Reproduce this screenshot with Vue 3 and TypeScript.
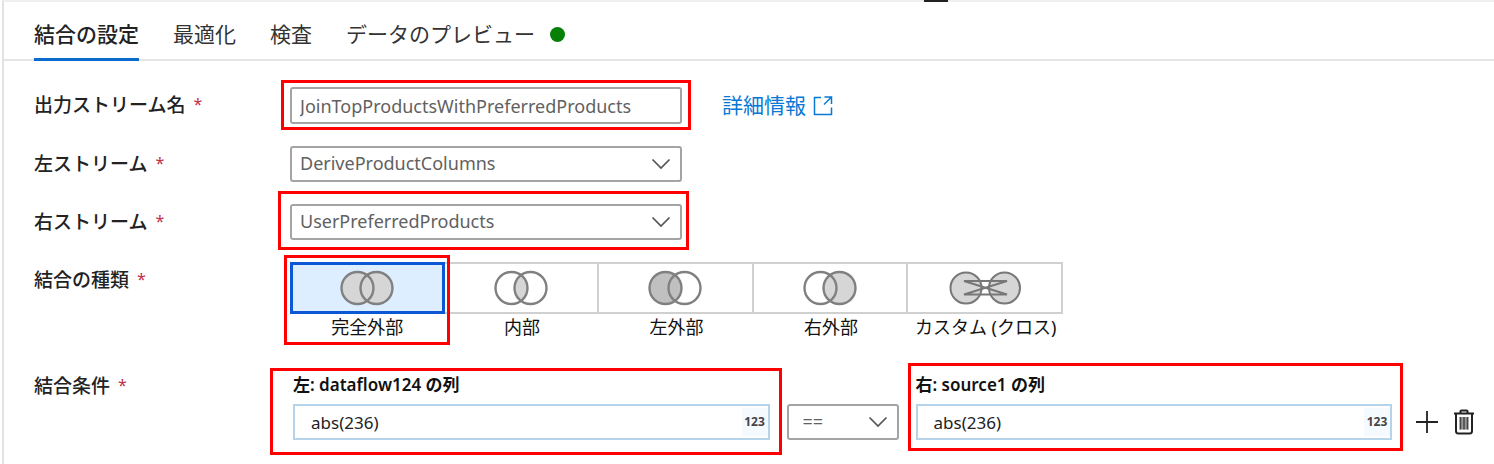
<script setup lang="ts">
import { ref } from 'vue'

type JoinKind = 'full' | 'inner' | 'left' | 'right' | 'cross'

const tabs = ['結合の設定', '最適化', '検査', 'データのプレビュー']
const activeTab = ref(0)

const outputName = ref('JoinTopProductsWithPreferredProducts')
const leftStream = ref('DeriveProductColumns')
const rightStream = ref('UserPreferredProducts')
const streams = ['DeriveProductColumns', 'UserPreferredProducts']

const joinKinds: { id: JoinKind; label: string }[] = [
  { id: 'full', label: '完全外部' },
  { id: 'inner', label: '内部' },
  { id: 'left', label: '左外部' },
  { id: 'right', label: '右外部' },
  { id: 'cross', label: 'カスタム (クロス)' },
]
const joinKind = ref<JoinKind>('full')

const leftExpr = ref('abs(236)')
const rightExpr = ref('abs(236)')
const operator = ref('==')
</script>

<template>
  <main class="panel">
    <span class="handle" aria-hidden="true"></span>
    <div class="tabs" role="tablist">
      <button
        v-for="(tab, i) in tabs"
        :key="tab"
        type="button"
        role="tab"
        class="tab"
        :class="{ active: activeTab === i }"
        :aria-selected="activeTab === i"
        @click="activeTab = i"
      >{{ tab }}</button>
      <span class="status"></span>
    </div>

    <form class="form" @submit.prevent>
      <div class="row">
        <label class="name" for="output">出力ストリーム名<span class="req">*</span></label>
        <div class="field marked marked-output">
          <input id="output" v-model="outputName" class="box" type="text" />
        </div>
        <a class="more" href="#">詳細情報
          <svg width="21" height="21" viewBox="0 0 21 21" fill="none" stroke="currentColor" stroke-width="1.5">
            <path d="M8 2.500H1.500V19.500H18.500V12.500M11.500 2H18.500V9M18.500 2L11 9.500" />
          </svg>
        </a>
      </div>

      <div class="row">
        <label class="name" for="left">左ストリーム<span class="req">*</span></label>
        <div class="field">
          <select id="left" v-model="leftStream" class="box">
            <option v-for="s in streams" :key="s">{{ s }}</option>
          </select>
          <svg class="chevron" width="20" height="12" viewBox="0 0 20 12"><path d="M1.500 1.500L10 10L18.500 1.500" /></svg>
        </div>
      </div>

      <div class="row">
        <label class="name" for="right">右ストリーム<span class="req">*</span></label>
        <div class="field marked marked-right">
          <select id="right" v-model="rightStream" class="box">
            <option v-for="s in streams" :key="s">{{ s }}</option>
          </select>
          <svg class="chevron" width="20" height="12" viewBox="0 0 20 12"><path d="M1.500 1.500L10 10L18.500 1.500" /></svg>
        </div>
      </div>

      <div class="row" role="radiogroup" aria-labelledby="kind-name">
        <span id="kind-name" class="name">結合の種類<span class="req">*</span></span>
        <div class="kinds">
          <label
            v-for="k in joinKinds"
            :key="k.id"
            class="kind"
            :class="{ selected: joinKind === k.id, marked: k.id === 'full', 'marked-kind': k.id === 'full' }"
          >
            <input v-model="joinKind" class="radio" type="radio" name="kind" :value="k.id" />
            <span class="tile">
              <svg v-if="k.id !== 'cross'" width="54" height="36" viewBox="0 0 54 36" stroke="#808080" stroke-width="2.400" fill="none">
                <circle v-if="k.id === 'full' || k.id === 'left'" cx="17.500" cy="18" r="16" :fill="k.id === 'left' ? '#c0c0c0' : '#d6d6d6'" stroke="none" />
                <circle v-if="k.id === 'full' || k.id === 'right'" cx="36.500" cy="18" r="16" fill="#d6d6d6" stroke="none" />
                <path v-if="k.id === 'inner'" d="M27 5.200A16 16 0 0 1 27 30.800A16 16 0 0 1 27 5.200Z" fill="#d6d6d6" stroke="none" />
                <circle cx="17.500" cy="18" r="16" />
                <circle cx="36.500" cy="18" r="16" />
              </svg>
              <svg v-else width="74" height="36" viewBox="0 0 74 36" stroke="#777" stroke-width="2" fill="none">
                <circle cx="18" cy="18" r="15.500" fill="#d6d6d6" />
                <circle cx="56.500" cy="18" r="15.500" fill="#d6d6d6" />
                <path d="M16 11H59L16 24.500H59L16 11Z" />
              </svg>
            </span>
            <span class="caption">{{ k.label }}</span>
          </label>
        </div>
      </div>

      <div class="row condition">
        <span class="name">結合条件<span class="req">*</span></span>
        <div class="clause">
          <div class="side marked marked-left-expr">
            <label class="heading" for="lexpr">左: dataflow124 の列</label>
            <div class="expr">
              <input id="lexpr" v-model="leftExpr" type="text" />
              <span class="kindtag">123</span>
            </div>
          </div>
          <div class="operator">
            <select v-model="operator" class="box" aria-label="演算子">
              <option>==</option>
            </select>
            <svg class="chevron" width="20" height="12" viewBox="0 0 20 12"><path d="M1.500 1.500L10 10L18.500 1.500" /></svg>
          </div>
          <div class="side marked marked-right-expr">
            <label class="heading" for="rexpr">右: source1 の列</label>
            <div class="expr">
              <input id="rexpr" v-model="rightExpr" type="text" />
              <span class="kindtag">123</span>
            </div>
          </div>
          <div class="actions">
            <button type="button" aria-label="追加">
              <svg width="24" height="24" viewBox="0 0 24 24" fill="none" stroke="#222" stroke-width="1.800"><path d="M12 1V23M1 12H23" /></svg>
            </button>
            <button type="button" aria-label="削除">
              <svg width="22" height="26" viewBox="0 0 22 26" fill="none" stroke="#222" stroke-width="2">
                <path d="M1 4.500H21M7.500 4V2Q7.500 1.500 8.500 1.500H13.500Q14.500 1.500 14.500 2V4M3 5V22Q3 24.500 5.500 24.500H16.500Q19 24.500 19 22V5" />
                <rect x="6.500" y="8" width="9" height="12.500" fill="#999" stroke="none" />
                <path d="M7.500 8V20.500M11 8V20.500M14.500 8V20.500" stroke="#444" stroke-width="1.500" />
              </svg>
            </button>
          </div>
        </div>
      </div>
    </form>
  </main>
</template>

<style>
body {
  margin: 0;
  background: #fff;
}
</style>

<style scoped>
.panel {
  position: relative;
  box-sizing: border-box;
  min-height: 100vh;
  margin-left: 2px;
  border-left: 2px solid #e3e3e3;
  border-top: 2px solid #efefef;
  color: #222;
  font-family: "Noto Sans", "Noto Sans CJK JP", sans-serif;
  font-size: 18px;
}
.panel *,
.panel *::after {
  box-sizing: border-box;
}
.handle {
  position: absolute;
  top: -2px;
  left: 920px;
  width: 24px;
  height: 2px;
  background: #222;
}
button,
input,
select {
  margin: 0;
  font: inherit;
  color: inherit;
}
button {
  padding: 0;
  border: 0;
  background: none;
}
.tabs {
  display: flex;
  align-items: stretch;
  gap: 34px;
  height: 59px;
  padding-left: 30px;
  border-bottom: 2px solid #e5e5e5;
}
.tab {
  height: 59px;
  padding-top: 6px;
  border-bottom: 3px solid transparent;
  font-size: 21px;
  color: #333;
  white-space: nowrap;
}
.tab.active {
  border-bottom-color: #0a6cce;
  font-weight: 500;
  color: #222;
}
.status {
  align-self: center;
  width: 15px;
  height: 15px;
  margin: 8px 0 0 -19px;
  border-radius: 50%;
  background: #088008;
}
.form {
  display: flex;
  flex-direction: column;
  gap: 22px;
  padding: 26px 19px 22px 30px;
}
.row {
  display: flex;
  align-items: flex-start;
}
.name {
  flex: 0 0 256px;
  font-size: 19px;
  font-weight: 500;
  line-height: 36px;
  white-space: nowrap;
}
.req {
  margin-left: 8px;
  font-size: 16px;
  font-weight: 400;
  line-height: 1;
  vertical-align: 2px;
  color: #c0304a;
}
.field {
  position: relative;
  flex: 0 1 392px;
}
.box {
  display: block;
  width: 100%;
  height: 36px;
  padding: 0 10px 2px 8px;
  border: 2px solid #a6a4a2;
  border-radius: 3px;
  outline: 0;
  background: #fff;
  color: #616161;
  appearance: none;
}
.marked-output .box {
  height: 37px;
  padding-bottom: 0;
}
.chevron {
  position: absolute;
  right: 11px;
  top: 12px;
  fill: none;
  stroke: #555;
  stroke-width: 1.7;
  pointer-events: none;
}
.more {
  display: flex;
  align-items: center;
  gap: 7px;
  margin-left: 40px;
  font-size: 21px;
  line-height: 37px;
  color: #0a78d4;
  text-decoration: none;
  white-space: nowrap;
}
.marked {
  position: relative;
}
.marked::after {
  content: "";
  position: absolute;
  border: 3px solid #f00;
  pointer-events: none;
}
.marked-output::after {
  inset: -7px -9px -6px;
}
.marked-right::after {
  inset: -13px -7px -10px -12px;
}
.marked-kind::after {
  inset: -7px -5px -5px -6px;
}
.marked-left-expr::after {
  inset: -6px -12px -15px -23px;
}
.marked-right-expr::after {
  inset: -11px -11px -11px -8px;
}
.kinds {
  display: flex;
  flex: 0 1 773px;
}
.kind {
  flex: 1;
  display: flex;
  flex-direction: column;
  align-items: center;
}
.radio {
  position: absolute;
  opacity: 0;
  pointer-events: none;
}
.tile {
  display: flex;
  align-items: center;
  justify-content: center;
  width: 100%;
  height: 52px;
  border: 2px solid #d0d0d0;
  border-left-width: 0;
}
.kind.selected .tile {
  border: 3px solid #0b57d6;
  background: #dceeff;
}
.caption {
  line-height: 26px;
  color: #111;
  white-space: nowrap;
}
.condition {
  margin-top: 12px;
}
.condition .name {
  flex-basis: 259px;
  line-height: 24px;
}
.clause {
  flex: 1;
  display: flex;
  align-items: flex-end;
}
.side {
  flex: 1;
}
.heading {
  display: block;
  height: 30px;
  font-size: 17px;
  font-weight: 600;
  line-height: 22px;
  color: #111;
}
.expr {
  display: flex;
  align-items: center;
  height: 36px;
  border: 2px solid #b5d4ea;
}
.expr input {
  flex: 1;
  min-width: 0;
  height: 32px;
  padding: 0 0 0 16px;
  border: 0;
  outline: 0;
  background: transparent;
  font-size: 17px;
}
.kindtag {
  width: 26px;
  background: #f5faff;
  font-size: 12px;
  font-weight: 700;
  line-height: 28px;
  text-align: center;
  color: #444;
}
.operator {
  position: relative;
  flex: 0 0 112px;
  margin: 0 17px;
}
.operator .box {
  padding-left: 14px;
}
.actions {
  display: flex;
  align-items: center;
  gap: 14px;
  height: 36px;
  margin-left: 23px;
}
.actions button {
  display: flex;
}
</style>
